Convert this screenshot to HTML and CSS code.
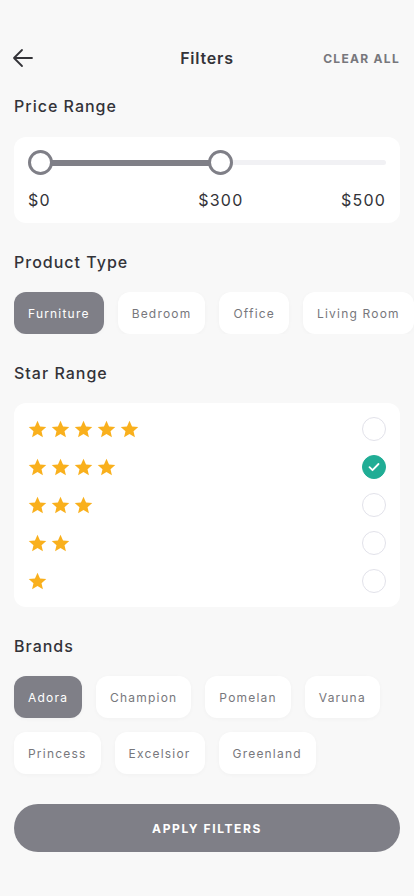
FILE: index.html
```html
<!DOCTYPE html>
<html>
<head>
<meta charset="utf-8">
<link rel="stylesheet" href="styles.css">
</head>
<body>
<div class="page">
  <header class="topbar">
    <svg class="back" width="22" height="22" viewBox="0 0 22 22"><path d="M20 11H2M10 3L2 11l8 8" fill="none" stroke="#333338" stroke-width="1.8" stroke-linecap="round" stroke-linejoin="round"/></svg>
    <h1 class="title">Filters</h1>
    <span class="clear">CLEAR ALL</span>
  </header>

  <h2 class="section-title first">Price Range</h2>
  <div class="card price-card">
    <div class="slider">
      <div class="track"></div>
      <div class="track-fill"></div>
      <div class="thumb thumb-left"></div>
      <div class="thumb thumb-right"></div>
    </div>
    <div class="price-labels">
      <span>$0</span>
      <span class="mid">$300</span>
      <span>$500</span>
    </div>
  </div>

  <h2 class="section-title">Product Type</h2>
  <div class="chips scroll">
    <span class="chip active">Furniture</span>
    <span class="chip">Bedroom</span>
    <span class="chip">Office</span>
    <span class="chip">Living Room</span>
  </div>

  <h2 class="section-title">Star Range</h2>
  <div class="card stars-card">
    <div class="star-row"><div class="stars"><svg viewBox="0 0 24 24"><path d="M12 2l2.9 6.6 7.1.6-5.4 4.7 1.6 7-6.2-3.7-6.2 3.7 1.6-7L2 9.2l7.1-.6z"/></svg><svg viewBox="0 0 24 24"><path d="M12 2l2.9 6.6 7.1.6-5.4 4.7 1.6 7-6.2-3.7-6.2 3.7 1.6-7L2 9.2l7.1-.6z"/></svg><svg viewBox="0 0 24 24"><path d="M12 2l2.9 6.6 7.1.6-5.4 4.7 1.6 7-6.2-3.7-6.2 3.7 1.6-7L2 9.2l7.1-.6z"/></svg><svg viewBox="0 0 24 24"><path d="M12 2l2.9 6.6 7.1.6-5.4 4.7 1.6 7-6.2-3.7-6.2 3.7 1.6-7L2 9.2l7.1-.6z"/></svg><svg viewBox="0 0 24 24"><path d="M12 2l2.9 6.6 7.1.6-5.4 4.7 1.6 7-6.2-3.7-6.2 3.7 1.6-7L2 9.2l7.1-.6z"/></svg></div><span class="radio"></span></div>
    <div class="star-row"><div class="stars"><svg viewBox="0 0 24 24"><path d="M12 2l2.9 6.6 7.1.6-5.4 4.7 1.6 7-6.2-3.7-6.2 3.7 1.6-7L2 9.2l7.1-.6z"/></svg><svg viewBox="0 0 24 24"><path d="M12 2l2.9 6.6 7.1.6-5.4 4.7 1.6 7-6.2-3.7-6.2 3.7 1.6-7L2 9.2l7.1-.6z"/></svg><svg viewBox="0 0 24 24"><path d="M12 2l2.9 6.6 7.1.6-5.4 4.7 1.6 7-6.2-3.7-6.2 3.7 1.6-7L2 9.2l7.1-.6z"/></svg><svg viewBox="0 0 24 24"><path d="M12 2l2.9 6.6 7.1.6-5.4 4.7 1.6 7-6.2-3.7-6.2 3.7 1.6-7L2 9.2l7.1-.6z"/></svg></div><span class="radio checked"><svg width="24" height="24" viewBox="0 0 24 24"><path d="M7.5 12.2l3 3 6-6.2" fill="none" stroke="#fff" stroke-width="1.8" stroke-linecap="round" stroke-linejoin="round"/></svg></span></div>
    <div class="star-row"><div class="stars"><svg viewBox="0 0 24 24"><path d="M12 2l2.9 6.6 7.1.6-5.4 4.7 1.6 7-6.2-3.7-6.2 3.7 1.6-7L2 9.2l7.1-.6z"/></svg><svg viewBox="0 0 24 24"><path d="M12 2l2.9 6.6 7.1.6-5.4 4.7 1.6 7-6.2-3.7-6.2 3.7 1.6-7L2 9.2l7.1-.6z"/></svg><svg viewBox="0 0 24 24"><path d="M12 2l2.9 6.6 7.1.6-5.4 4.7 1.6 7-6.2-3.7-6.2 3.7 1.6-7L2 9.2l7.1-.6z"/></svg></div><span class="radio"></span></div>
    <div class="star-row"><div class="stars"><svg viewBox="0 0 24 24"><path d="M12 2l2.9 6.6 7.1.6-5.4 4.7 1.6 7-6.2-3.7-6.2 3.7 1.6-7L2 9.2l7.1-.6z"/></svg><svg viewBox="0 0 24 24"><path d="M12 2l2.9 6.6 7.1.6-5.4 4.7 1.6 7-6.2-3.7-6.2 3.7 1.6-7L2 9.2l7.1-.6z"/></svg></div><span class="radio"></span></div>
    <div class="star-row"><div class="stars"><svg viewBox="0 0 24 24"><path d="M12 2l2.9 6.6 7.1.6-5.4 4.7 1.6 7-6.2-3.7-6.2 3.7 1.6-7L2 9.2l7.1-.6z"/></svg></div><span class="radio"></span></div>
  </div>

  <h2 class="section-title">Brands</h2>
  <div class="chips wrap">
    <span class="chip active">Adora</span>
    <span class="chip">Champion</span>
    <span class="chip">Pomelan</span>
    <span class="chip">Varuna</span>
    <span class="chip">Princess</span>
    <span class="chip">Excelsior</span>
    <span class="chip">Greenland</span>
  </div>

  <button class="apply">APPLY FILTERS</button>
</div>
</body>
</html>
```

FILE: styles.css
```css
* { box-sizing: border-box; }
html, body {
  margin: 0;
  padding: 0;
  background: #f8f8f8;
}
body {
  font-family: Inter, "Noto Sans", sans-serif;
  color: #333338;
  width: 414px;
  height: 896px;
  overflow: hidden;
}
.page {
  padding: 38px 14px 0 14px;
}
.topbar {
  height: 40px;
  display: flex;
  align-items: center;
  justify-content: space-between;
  position: relative;
}
.back {
  margin-left: -2px;
  display: block;
}
.title {
  position: absolute;
  left: 0;
  right: 0;
  text-align: center;
  margin: 0;
  font-size: 16px;
  font-weight: 600;
  letter-spacing: 0.8px;
  pointer-events: none;
}
.clear {
  font-size: 12px;
  font-weight: 700;
  letter-spacing: 1.3px;
  color: #77777c;
}
.section-title {
  margin: 29px 0 20px 0;
  font-size: 16px;
  font-weight: 500;
  line-height: 20px;
  letter-spacing: 1px;
  color: #333338;
}
.section-title.first {
  margin-top: 18px;
  margin-bottom: 21px;
}
.card {
  background: #fff;
  border-radius: 12px;
}
.price-card {
  height: 86px;
  padding: 13px 14px 0 14px;
}
.slider {
  position: relative;
  height: 25px;
}
.track {
  position: absolute;
  left: 12px;
  right: 0;
  top: 10px;
  height: 5px;
  border-radius: 3px;
  background: #f1f1f4;
}
.track-fill {
  position: absolute;
  left: 12px;
  width: 180px;
  top: 9.5px;
  height: 6px;
  background: #7f7f87;
}
.thumb {
  position: absolute;
  top: 0;
  width: 25px;
  height: 25px;
  border-radius: 50%;
  border: 3.5px solid #7f7f87;
  background: #fff;
}
.thumb-left { left: 0; }
.thumb-right { left: 180px; }
.price-labels {
  display: flex;
  justify-content: space-between;
  margin-top: 15px;
  font-size: 16px;
  line-height: 20px;
  letter-spacing: 1.2px;
  color: #333338;
}
.price-labels .mid {
  margin-left: 50px;
}
.chips {
  display: flex;
  gap: 14px;
}
.chips.scroll {
  flex-wrap: nowrap;
  overflow: hidden;
  margin-right: -14px;
}
.chips.wrap {
  flex-wrap: wrap;
}
.chip {
  flex: none;
  height: 42px;
  display: flex;
  align-items: center;
  padding: 0 14px;
  background: #fff;
  border-radius: 12px;
  font-size: 12px;
  letter-spacing: 1.2px;
  color: #77777c;
  box-shadow: 0 1px 4px rgba(0,0,0,0.03);
}
.chip.active {
  background: #7f7f87;
  color: #fff;
}
.stars-card {
  padding: 7px 13px;
}
.star-row {
  height: 38px;
  display: flex;
  align-items: center;
  justify-content: space-between;
}
.stars {
  display: flex;
  gap: 2px;
}
.stars svg {
  width: 21px;
  height: 21px;
  fill: #f9b01d;
  display: block;
}
.radio {
  width: 24px;
  height: 24px;
  margin-right: 1px;
  border-radius: 50%;
  border: 1px solid #e2e2ea;
  display: block;
}
.radio.checked {
  background: #20ad95;
  border-color: #20ad95;
}
.radio.checked svg {
  display: block;
  margin: -1px;
}
.apply {
  display: block;
  width: 100%;
  height: 48px;
  margin-top: 30px;
  border: none;
  border-radius: 24px;
  background: #7f7f87;
  color: #fff;
  font-family: Inter, "Noto Sans", sans-serif;
  font-size: 12px;
  font-weight: 700;
  letter-spacing: 1.6px;
}
```
